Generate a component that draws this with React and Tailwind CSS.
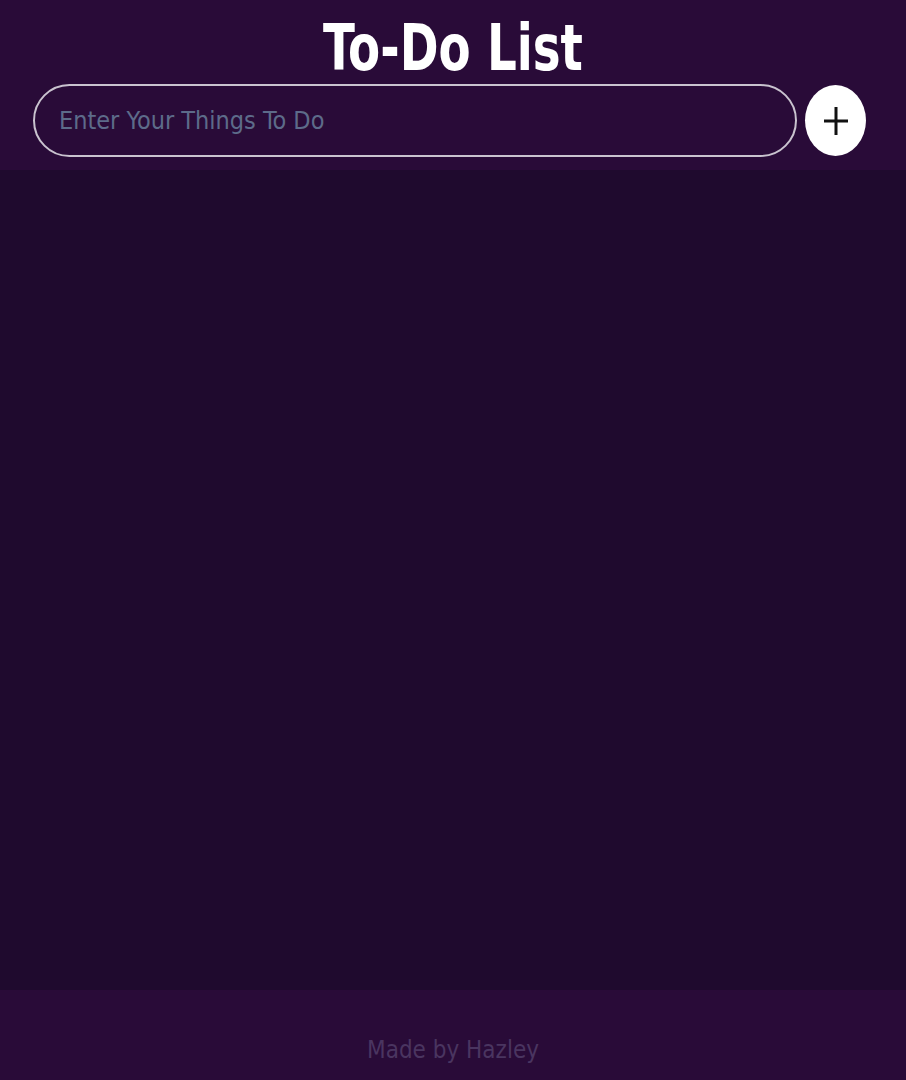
import { useState } from 'react';

export default function App() {
    const [todo, setTodo] = useState("");

    return (
        <div className="flex flex-col min-h-screen bg-[#1f0a2e] font-['DejaVu_Sans_Condensed','Liberation_Sans_Narrow',sans-serif]">
            <header className="h-[170px] bg-[#290b38] flex flex-col items-center pt-[10px]">
                <h1 className="text-[52px] leading-[60px] font-bold text-white scale-y-[1.24] origin-top">To-Do List</h1>
                <div className="w-full flex items-center gap-2 pl-[33px] pr-[40px] mt-[14px]">
                    <input
                        value={todo}
                        onChange={(e) => setTodo(e.target.value)}
                        placeholder="Enter Your Things To Do"
                        className="flex-1 h-[73px] rounded-full border-2 border-[#c9c3cf] bg-transparent px-6 text-[25px] text-white placeholder:text-[#5d6b8a] outline-none"
                    />
                    <button className="w-[61px] h-[71px] rounded-[50%] bg-white flex items-center justify-center">
                        <svg width="26" height="30" viewBox="0 0 26 30" fill="none" stroke="#111" strokeWidth="3">
                            <path d="M13 1v28M1 15h24" />
                        </svg>
                    </button>
                </div>
            </header>

            <main className="flex-1"></main>

            <footer className="h-[90px] bg-[#290b38] flex items-center justify-center pt-[30px]">
                <p className="text-[24px] text-[#4a3560]">Made by Hazley</p>
            </footer>
        </div>
    );
}
